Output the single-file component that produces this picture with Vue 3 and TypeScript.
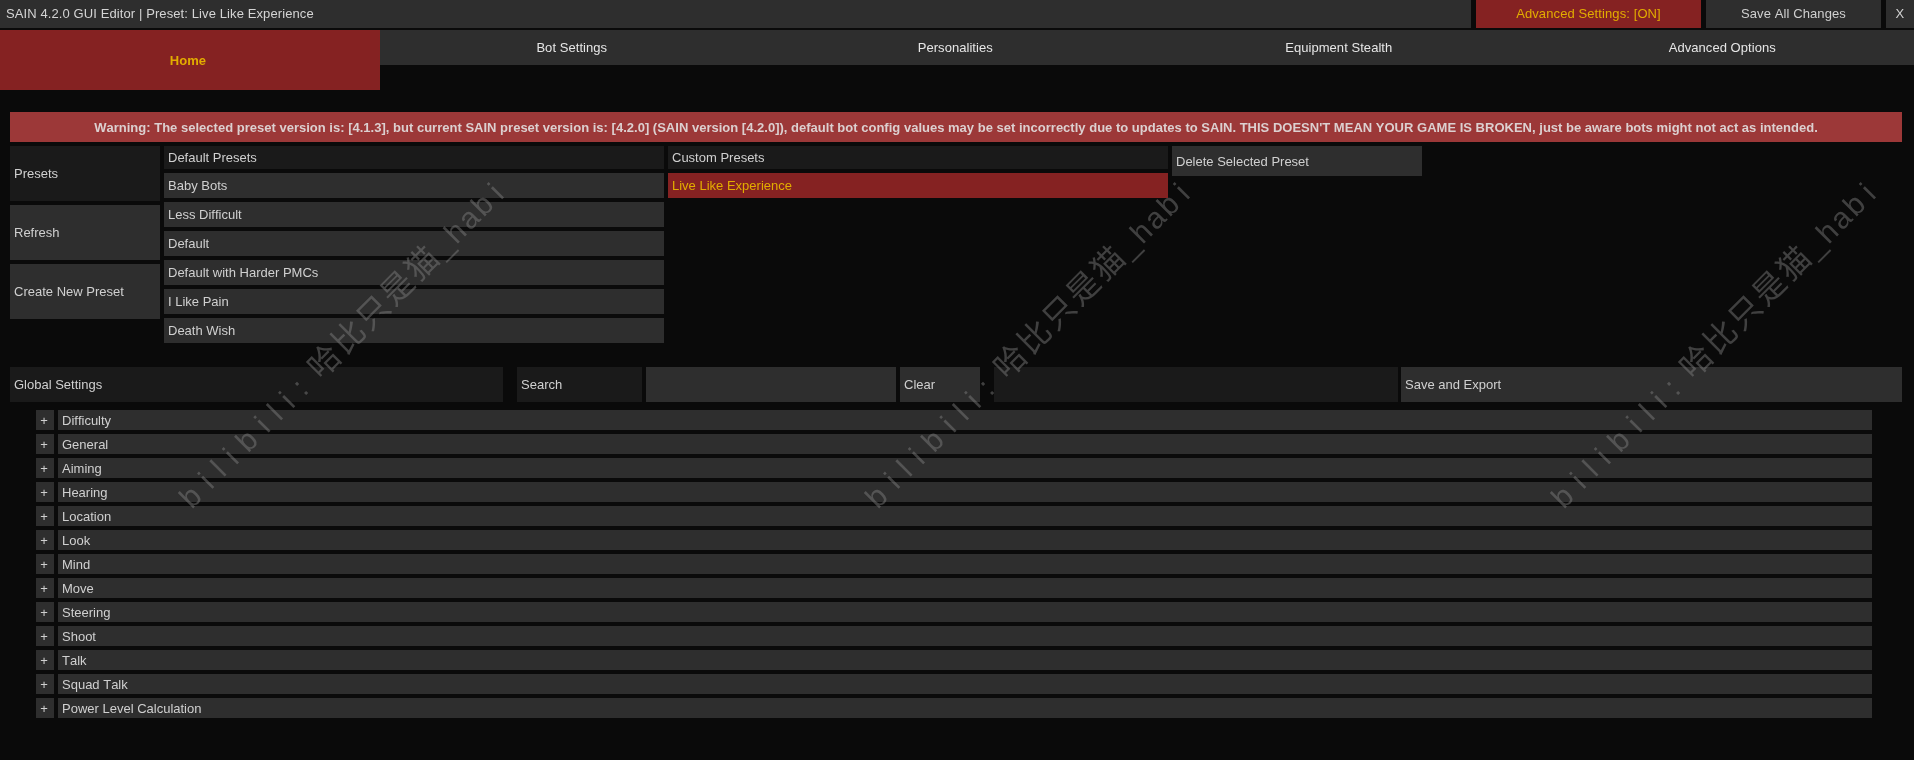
<template>
  <div class="editor">
    <!-- title bar -->
    <div class="title-row">
      <div class="title-text">SAIN 4.2.0 GUI Editor | Preset: Live Like Experience</div>
      <button class="btn adv on">Advanced Settings: [ON]</button>
      <button class="btn save">Save All Changes</button>
      <button class="btn close">X</button>
    </div>

    <!-- tabs -->
    <div class="tabs">
      <div class="tab home">Home</div>
      <div v-for="t in tabs" :key="t" class="tab">{{ t }}</div>
    </div>

    <div class="warning">
      Warning: The selected preset version is: [4.1.3], but current SAIN preset version is: [4.2.0] (SAIN version [4.2.0]), default bot config values may be set incorrectly due to updates to SAIN. THIS DOESN'T MEAN YOUR GAME IS BROKEN, just be aware bots might not act as intended.
    </div>

    <!-- preset picker -->
    <div class="presets">
      <div class="side">
        <div class="btn side-btn dark">Presets</div>
        <div class="btn side-btn">Refresh</div>
        <div class="btn side-btn">Create New Preset</div>
      </div>
      <div class="list">
        <div class="btn list-head dark">Default Presets</div>
        <div v-for="p in defaultPresets" :key="p" class="btn list-item">{{ p }}</div>
      </div>
      <div class="list">
        <div class="btn list-head dark">Custom Presets</div>
        <div class="btn list-item on">Live Like Experience</div>
      </div>
      <div class="btn delete">Delete Selected Preset</div>
    </div>

    <!-- search row -->
    <div class="search-row">
      <div class="btn dark global">Global Settings</div>
      <div class="btn dark search">Search</div>
      <div class="btn search-input"></div>
      <div class="btn clear">Clear</div>
      <div class="btn dark filler"></div>
      <div class="btn export">Save and Export</div>
    </div>

    <!-- settings groups -->
    <div class="groups">
      <div v-for="g in groups" :key="g" class="group">
        <div class="btn plus">+</div>
        <div class="btn group-name">{{ g }}</div>
      </div>
    </div>

    <!-- watermark -->
    <div
      v-for="x in marks"
      :key="x"
      class="mark"
      :style="{ left: x + 'px' }"
    ><span class="mark-site">b i l i b i l i :</span><span class="mark-name">哈比只是猫</span>_hab&#8202;i</div>
  </div>
</template>

<script setup lang="ts">
const tabs: string[] = ['Bot Settings', 'Personalities', 'Equipment Stealth', 'Advanced Options']
const defaultPresets: string[] = ['Baby Bots', 'Less Difficult', 'Default', 'Default with Harder PMCs', 'I Like Pain', 'Death Wish']
const groups: string[] = ['Difficulty', 'General', 'Aiming', 'Hearing', 'Location', 'Look', 'Mind', 'Move', 'Steering', 'Shoot', 'Talk', 'Squad Talk', 'Power Level Calculation']
const marks: number[] = [62, 748, 1434]
</script>

<style scoped>
.editor{position:relative;width:1914px;height:760px;overflow:hidden;background:#0a0a0a;color:#d0d0d0;font:13px "Liberation Sans","Noto Sans CJK SC",sans-serif;font-kerning:none;will-change:transform}
.btn{background:#2e2e2e;color:#d0d0d0;display:flex;align-items:center;padding:0 4px;box-sizing:border-box;border:0;font:inherit;font-kerning:none}
.btn.dark{background:#1a1a1a}
.on{background:#852222;color:#e2ad00}
.btn.on{background:#852222;color:#e2ad00}

.title-row{display:flex;height:28px;gap:5px;letter-spacing:.1px}
.title-text{flex:1;background:#2e2e2e;display:flex;align-items:center;padding:0 6px 1px;color:#d4d4d4}
.title-row button{justify-content:center;padding:0 0 1px;letter-spacing:.1px}
.adv{width:225px}
.save{width:175px}
.close{width:28px}

.tabs{display:flex;margin-top:2px;height:35px;background:#2e2e2e;color:#e6e6e6;overflow:visible;letter-spacing:.05px}
.tab{flex:1;display:flex;align-items:center;justify-content:center}
.tab.home{flex:0 0 380px;height:60px;padding-right:4px;box-sizing:border-box;background:#852222;color:#e2ad00;font-weight:700}

.warning{margin:47px 12px 0 10px;height:30px;background:#9c3838;color:#dcd0d0;font-weight:700;display:flex;align-items:center;justify-content:center;white-space:nowrap;letter-spacing:.01px}

.presets{display:flex;align-items:flex-start;margin:4px 0 0 10px;gap:4px}
.side{width:150px;display:flex;flex-direction:column;gap:4px}
.side-btn{height:55px}
.list{width:500px;display:flex;flex-direction:column;gap:4px}
.list-head{height:23px}
.list-item{height:25px}
.delete{width:250px;height:30px}

.search-row{display:flex;height:35px;margin:24px 12px 0 10px}
.global{width:493px}
.search{width:125px;margin-left:14px}
.search-input{width:250px;margin-left:4px}
.clear{width:80px;margin-left:4px}
.filler{width:404px;margin-left:14px}
.export{flex:1;margin-left:3px}

.groups{display:flex;flex-direction:column;gap:4px;margin:8px 42px 0 36px}
.group{display:flex;height:20px;gap:4px}
.plus{width:18px;justify-content:center;padding:0 2px 0 0}
.group-name{flex:1}

.mark{position:absolute;top:328px;width:560px;text-align:center;color:rgba(130,130,130,.45);font-size:30px;line-height:32px;letter-spacing:2.5px;white-space:nowrap;transform:rotate(-45deg);pointer-events:none}
.mark-site{letter-spacing:1.2px;margin-right:14px}
.mark-name{font-size:32px}
</style>

<style>
html,body{background:#0a0a0a}
</style>
